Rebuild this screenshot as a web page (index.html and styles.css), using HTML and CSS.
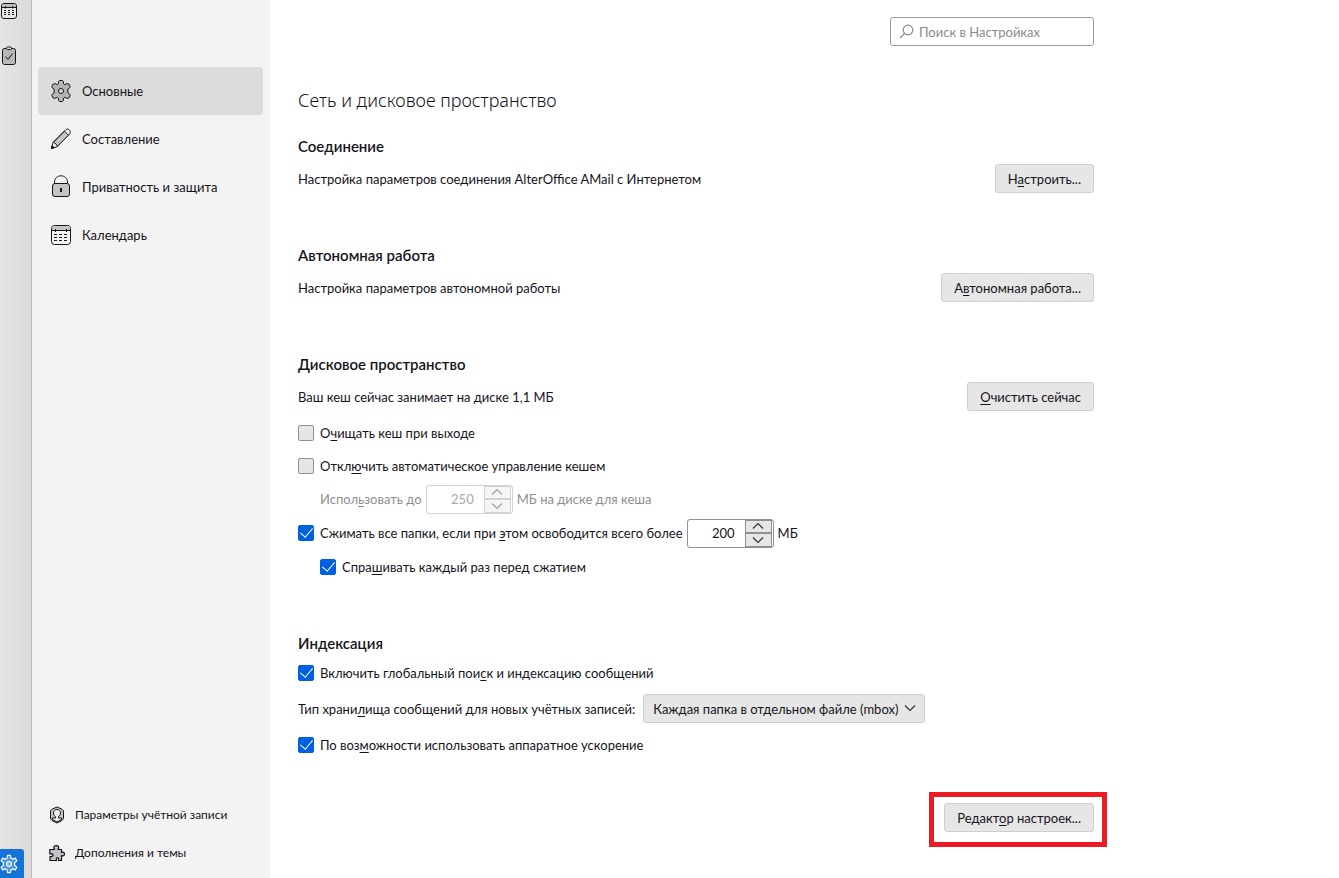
FILE: index.html
```
<!DOCTYPE html>
<html lang="ru">
<head>
    <meta charset="UTF-8">
    <meta name="viewport" content="width=device-width, initial-scale=1.0">
    <title>Настройки</title>
    <link rel="stylesheet" href="styles.css">
</head>
<body>
    <!-- Панель мест -->
    <div class="spaces">
        <button type="button" class="space" aria-label="Календарь">
            <svg width="18" height="18" viewBox="0 0 18 18" fill="none" stroke="#15141a">
                <rect x="1.5" y="1.5" width="15" height="15" rx="2.5" fill="#e8e8e8"/>
                <path d="M2 5.5V4a2 2 0 0 1 2-2h10a2 2 0 0 1 2 2v1.5z" fill="#bbb" stroke="none"/>
                <path d="M1.5 5.5h15M5.5 4v2.500M12.500 4v2.500"/>
                <path d="M4 8.500h10M4 10.500h10M4 12.500h10" stroke-dasharray="2 2"/>
            </svg>
        </button>
        <button type="button" class="space" aria-label="Задачи">
            <svg width="18" height="20" viewBox="0 0 18 20" fill="none" stroke="#15141a">
                <rect x="2.500" y="2.500" width="13" height="16" rx="2" fill="#b8b8b8"/>
                <rect x="6.500" y="1" width="5" height="2.500" rx="1" fill="#e3e3e3"/>
                <path d="M5.500 10.500l2.500 3 4.500-6"/>
            </svg>
        </button>
        <button type="button" class="space space-active" aria-label="Настройки">
            <svg width="18" height="20" viewBox="0 0 22 24" fill="#ffffff40" stroke="#fff" stroke-width="1.400">
                <path d="M9.200 1.500h3.600l.6 3.400 2 1.100 3.300-1.200 1.900 3.200-2.700 2.300v3.400l2.700 2.300-1.900 3.200-3.300-1.200-2 1.100-.6 3.400H9.200l-.6-3.400-2-1.100-3.300 1.200L1.400 16l2.700-2.300v-3.400L1.400 8l1.900-3.200L6.600 6l2-1.100z" stroke-linejoin="round"/>
                <circle cx="11" cy="12" r="3"/>
            </svg>
        </button>
    </div>

    <!-- Категории -->
    <nav class="sidebar">
        <a href="#general" class="category selected">
            <svg width="22" height="22" viewBox="0 0 22 22" fill="#b4b4b6" stroke="#15141a">
                <path d="M9.500.5h3l1 1v2.200l1.200 1 2-1 2 .2 1.500 2.400-.5 1.600-1.800 1.200v3.800l1.800 1.200.5 1.600-1.500 2.400-2 .2-2-1-1.200 1v2.200l-1 1h-3l-1-1v-2.200l-1.200-1-2 1-2-.2-1.500-2.400.5-1.600 1.800-1.200V9.100L2.300 7.900l-.5-1.600 1.500-2.400 2-.2 2 1 1.200-1V1.500z" stroke-linejoin="round"/>
                <circle cx="11" cy="11" r="2.500" fill="#dcdcdc"/>
            </svg>
            <span>Основные</span>
        </a>
        <a href="#compose" class="category">
            <svg width="22" height="22" viewBox="0 0 22 22" fill="#f3f3f3" stroke="#15141a" stroke-linejoin="round">
                <path d="M1.500 20.500l1.500-6L15.800 1.700c1.200-1 2.500-.7 3.500.2s1.500 2.500.5 3.700L7 18.700z"/>
                <path d="M3.500 14.200L14.500 3.200l4 4-11 11-1.500-2.200z" fill="#c4c4c6"/>
                <path d="M1.500 20.500l.7-2.800 2 2z" fill="#15141a"/>
            </svg>
            <span>Составление</span>
        </a>
        <a href="#privacy" class="category">
            <svg width="22" height="24" viewBox="0 0 22 24" fill="none" stroke="#15141a">
                <path d="M4.500 8.500V7c0-3.700 2.900-6.200 6.500-6.200s6.500 2.500 6.500 6.200v1.500"/>
                <rect x="2.500" y="8.500" width="17" height="13" rx="2.500" fill="#c4c4c6"/>
                <rect x="10" y="13" width="2" height="4" fill="#15141a" stroke="none"/>
            </svg>
            <span>Приватность и защита</span>
        </a>
        <a href="#calendar" class="category">
            <svg width="22" height="22" viewBox="0 0 22 22" fill="none" stroke="#15141a">
                <rect x="1.500" y="1.500" width="19" height="19" rx="3"/>
                <path d="M2 6V4.500A2.500 2.500 0 0 1 4.500 2h13A2.500 2.500 0 0 1 20 4.500V6z" fill="#c4c4c6" stroke="none"/>
                <path d="M1.500 6.500h19M5.500 5v3M16.500 5v3"/>
                <path d="M4 10.500h15M4 13.500h15M4 16.500h15" stroke-dasharray="3 2"/>
            </svg>
            <span>Календарь</span>
        </a>

        <div class="sidebar-footer">
            <a href="#account" class="footer-link">
                <svg width="16" height="18" viewBox="0 0 16 18" fill="#c4c4c6" stroke="#15141a" stroke-linejoin="round">
                    <path d="M8 1l5 2.200 1.500 1.800v7.500L13 14.500 8 17l-5-2.500-1.500-2V5L3 3.200z"/>
                    <path d="M3.500 13.500V12h3v-1.500C5 9.500 4.500 8.500 4.500 7c0-2 1.500-3.500 3.500-3.500S11.500 5 11.500 7c0 1.500-.5 2.500-2 3.500V12h3v1.500L8 16z" fill="#f3f3f3"/>
                </svg>
                <span>Параметры учётной записи</span>
            </a>
            <a href="#addons" class="footer-link">
                <svg width="16" height="18" viewBox="0 0 16 18" fill="#c4c4c6" stroke="#15141a" stroke-width="1.200" stroke-linejoin="round">
                    <path d="M5.500 5.500C5 4.500 4.500 3.500 5 2.500s3.500-1.500 4.500 0c.5 1 0 2-.5 3h3.500v3c1-.5 2.200-.5 2.800.5.5 1 0 2.500-.8 2.800-.8.3-1.500 0-2-.3v5H9.500c.3-1 .3-3-1-3s-1.300 2-1 3H1v-4c1.500.3 3 0 3-1.500S2.500 9.800.8 10V5.500z"/>
                </svg>
                <span>Дополнения и темы</span>
            </a>
        </div>
    </nav>

    <main class="main">
        <div class="content">
            <div class="search">
                <svg class="search-icon" width="16" height="16" viewBox="0 0 16 16" fill="none" stroke="#8a8a8e" stroke-width="1.200">
                    <circle cx="9" cy="6" r="4.800"/>
                    <path d="M5.500 9.500L1 14"/>
                </svg>
                <input type="search" aria-label="Поиск в Настройках" placeholder="Поиск в Настройках">
            </div>

            <h1>Сеть и дисковое пространство</h1>

            <section>
                <h2>Соединение</h2>
                <div class="row">
                    <span>Настройка параметров соединения AlterOffice AMail с Интернетом</span>
                    <button type="button" class="button">Н<u>а</u>строить...</button>
                </div>
            </section>

            <section>
                <h2>Автономная работа</h2>
                <div class="row">
                    <span>Настройка параметров автономной работы</span>
                    <button type="button" class="button">А<u>в</u>тономная работа...</button>
                </div>
            </section>

            <section>
                <h2>Дисковое пространство</h2>
                <div class="row">
                    <span>Ваш кеш сейчас занимает на диске 1,1 МБ</span>
                    <button type="button" class="button"><u>О</u>чистить сейчас</button>
                </div>
                <div class="options">
                    <div class="option">
                        <input type="checkbox" id="clearCache">
                        <label for="clearCache">О<u>ч</u>ищать кеш при выходе</label>
                    </div>
                    <div class="option">
                        <input type="checkbox" id="manualCache">
                        <label for="manualCache">Откл<u>ю</u>чить автоматическое управление кешем</label>
                    </div>
                    <div class="option option-spin indent disabled">
                        <label for="cacheSize">Испол<u>ь</u>зовать до</label>
                        <div class="spin">
                            <input type="number" id="cacheSize" value="250" disabled>
                            <div class="spin-buttons">
                                <button type="button" aria-label="Больше" disabled><svg width="12" height="8" viewBox="0 0 12 8"><path d="M1 6.500l5-5 5 5"/></svg></button>
                                <button type="button" aria-label="Меньше" disabled><svg width="12" height="8" viewBox="0 0 12 8"><path d="M1 1.500l5 5 5-5"/></svg></button>
                            </div>
                        </div>
                        <span>МБ на диске для кеша</span>
                    </div>
                    <div class="option option-spin">
                        <input type="checkbox" id="compact" checked>
                        <label for="compact">Сжимать все папки, если при <u>э</u>том освободится всего более</label>
                        <div class="spin">
                            <input type="number" id="compactSize" aria-label="Порог сжатия, МБ" value="200">
                            <div class="spin-buttons">
                                <button type="button" aria-label="Больше"><svg width="12" height="8" viewBox="0 0 12 8"><path d="M1 6.500l5-5 5 5"/></svg></button>
                                <button type="button" aria-label="Меньше"><svg width="12" height="8" viewBox="0 0 12 8"><path d="M1 1.500l5 5 5-5"/></svg></button>
                            </div>
                        </div>
                        <span>МБ</span>
                    </div>
                    <div class="option indent">
                        <input type="checkbox" id="askCompact" checked>
                        <label for="askCompact">Спра<u>ш</u>ивать каждый раз перед сжатием</label>
                    </div>
                </div>
            </section>

            <section class="indexing">
                <h2>Индексация</h2>
                <div class="option">
                    <input type="checkbox" id="globalSearch" checked>
                    <label for="globalSearch">Включить глобальный пои<u>с</u>к и индексацию сообщений</label>
                </div>
                <div class="option option-store">
                    <label for="storeType">Тип храни<u>л</u>ища сообщений для новых учётных записей:</label>
                    <div class="select">
                        <select id="storeType">
                            <option>Каждая папка в отдельном файле (mbox)</option>
                        </select>
                        <svg width="12" height="8" viewBox="0 0 12 8"><path d="M1 1.500l5 5 5-5"/></svg>
                    </div>
                </div>
                <div class="option">
                    <input type="checkbox" id="hardware" checked>
                    <label for="hardware">По воз<u>м</u>ожности использовать аппаратное ускорение</label>
                </div>
            </section>

            <div class="editor">
                <div class="highlight">
                    <button type="button" class="button">Редакт<u>о</u>р настроек...</button>
                </div>
            </div>
        </div>
    </main>
</body>
</html>
```
FILE: styles.css
```
* {
    box-sizing: border-box;
}

body {
    margin: 0;
    display: flex;
    min-height: 100vh;
    font-family: Lato, "Noto Sans", sans-serif;
    font-size: 13px;
    line-height: 18px;
    color: #15141a;
    background-color: #fff;
}

button, input, select {
    font: inherit;
    color: inherit;
    margin: 0;
}

u {
    text-underline-offset: 2px;
}

/* Панель мест */
.spaces {
    display: flex;
    flex-direction: column;
    gap: 26px;
    width: 32px;
    flex-shrink: 0;
    padding-top: 2px;
    background: linear-gradient(to right, #e4e4e4, #dadada);
    border-right: 1px solid #bdbdbd;
}

.space {
    display: flex;
    align-items: center;
    width: 24px;
    padding: 0;
    border: none;
    background: none;
}

.space-active {
    height: 29px;
    margin-top: auto;
    background-color: #1373d9;
    border-radius: 0 3px 0 0;
}

/* Категории */
.sidebar {
    display: flex;
    flex-direction: column;
    width: 238px;
    flex-shrink: 0;
    padding: 67px 7px 6px 6px;
    background-color: #f3f3f3;
}

.category {
    display: flex;
    align-items: center;
    gap: 10px;
    height: 48px;
    padding: 0 12px;
    border-radius: 4px;
    color: inherit;
    text-decoration: none;
}

.selected {
    background-color: #dcdcdc;
}

.sidebar-footer {
    margin-top: auto;
}

.footer-link {
    display: flex;
    align-items: center;
    gap: 10px;
    height: 38px;
    padding: 0 11px;
    font-size: 12px;
    color: inherit;
    text-decoration: none;
}

/* Содержимое */
.main {
    flex: 1;
    padding: 17px 28px;
}

.content {
    max-width: 796px;
}

.search {
    display: flex;
    align-items: center;
    width: 204px;
    height: 29px;
    margin-left: auto;
    padding: 0 8px;
    gap: 4px;
    border: 1px solid #9a9a9e;
    border-radius: 3px;
}

.search-icon {
    flex-shrink: 0;
}

.search input {
    flex: 1;
    min-width: 0;
    padding: 0;
    border: none;
    outline: none;
    background: none;
}

.search input::placeholder {
    color: #8a8a8e;
}

h1 {
    margin: 41px 0 22px;
    font-family: "Noto Sans", sans-serif;
    font-size: 18px;
    font-weight: 300;
    line-height: 26px;
}

h2 {
    margin: 0 0 7px;
    font-size: 15px;
    font-weight: 600;
    line-height: 22px;
}

section {
    margin-bottom: 51px;
}

.row {
    display: flex;
    align-items: center;
    justify-content: space-between;
}

.button {
    height: 29px;
    padding: 0 12px;
    border: 1px solid #cfcfcf;
    border-radius: 3px;
    background-color: #e6e6e6;
}

.options {
    display: flex;
    flex-direction: column;
    gap: 4px;
    margin-top: 7px;
}

.option {
    display: flex;
    align-items: center;
    min-height: 29px;
}

.option-spin {
    min-height: 30px;
}

.indent {
    padding-left: 22px;
}

.disabled {
    color: #8f8f91;
}

input[type="checkbox"] {
    appearance: none;
    display: flex;
    align-items: center;
    justify-content: center;
    width: 16px;
    height: 16px;
    margin-right: 6px;
    border: 1px solid #919191;
    border-radius: 2px;
    background-color: #e6e6e6;
}

input[type="checkbox"]:checked {
    border-color: #0061e0;
    background-color: #0061e0;
}

input[type="checkbox"]:checked::after {
    content: "";
    width: 6px;
    height: 11px;
    margin-bottom: 4px;
    border: solid #fff;
    border-width: 0 1px 1px 0;
    transform: rotate(40deg);
}

.spin {
    display: flex;
    width: 87px;
    height: 29px;
    margin: 0 4px;
    border: 1px solid #8f8f9d;
    border-radius: 3px;
    background-color: #fff;
}

.spin input {
    appearance: textfield;
    flex: 1;
    min-width: 0;
    padding: 0 10px 0 0;
    border: none;
    background: none;
    text-align: right;
}

.spin input::-webkit-inner-spin-button {
    display: none;
}

.spin-buttons {
    display: flex;
    flex-direction: column;
    width: 28px;
    padding-right: 1px;
}

.spin-buttons button {
    display: flex;
    flex: 1;
    align-items: center;
    justify-content: center;
    padding: 0;
    border: 1px solid #8f8f8f;
    background-color: #e6e6e6;
}

.spin svg, .select svg {
    fill: none;
    stroke: #333;
    stroke-width: 1.2;
}

.disabled .spin, .disabled button {
    border-color: #d2d2d4;
}

.disabled button {
    background-color: #f5f5f5;
}

.disabled svg {
    stroke: #a0a0a0;
}

.disabled input {
    color: #a8a8a8;
}

.indexing {
    margin: 50px 0 44px;
}

.indexing h2 {
    margin-bottom: 4px;
}

.option-store {
    margin: 7px 0;
    gap: 8px;
}

.select {
    position: relative;
}

.select select {
    appearance: none;
    height: 29px;
    padding: 0 25px 0 9px;
    border: 1px solid #cfcfcf;
    border-radius: 3px;
    background-color: #e6e6e6;
}

.select svg {
    position: absolute;
    right: 9px;
    top: 10px;
    pointer-events: none;
}

.editor {
    display: flex;
    justify-content: flex-end;
}

/* Красная рамка вокруг кнопки */
.highlight {
    position: relative;
}

.highlight::after {
    content: "";
    position: absolute;
    inset: -11px -13px -15px -15px;
    border: 5px solid #ed1c24;
    pointer-events: none;
}
```
